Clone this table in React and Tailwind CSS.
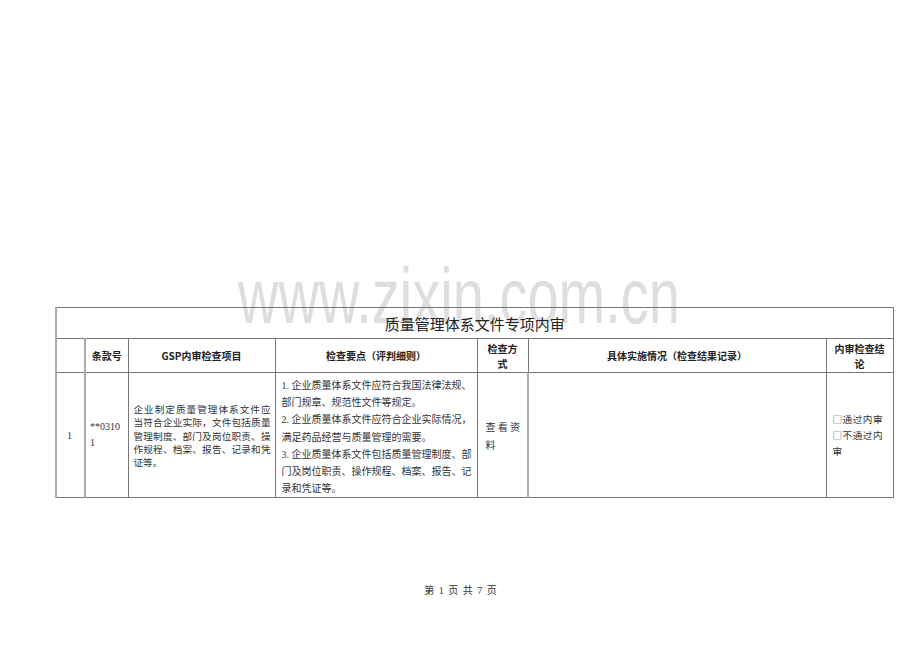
import React from 'react';

// 质量管理体系文件专项内审 — single page of an audit checklist
const serif = "font-['Liberation_Serif','Noto_Sans_CJK_SC',serif]";
const sans = "font-['Noto_Sans_CJK_SC','Noto_Sans',sans-serif]";

function Lines({ lines, className }) {
  // every line but the last is stretched to the full width, like the Word source
  return (
    <div className={className}>
      {lines.map((t, i) => (
        <div
          key={i}
          className={'whitespace-nowrap ' + (i < lines.length - 1 ? '[text-align-last:justify] text-justify' : '')}
        >
          {t}
        </div>
      ))}
    </div>
  );
}

export default function App() {
  const item = [
    '企业制定质量管理体系文件应',
    '当符合企业实际，文件包括质量',
    '管理制度、部门及岗位职责、操',
    '作规程、档案、报告、记录和凭',
    '证等。',
  ];
  const points = [
    ['1. 企业质量体系文件应符合我国法律法规、', '部门规章、规范性文件等规定。'],
    ['2. 企业质量体系文件应符合企业实际情况，', '满足药品经营与质量管理的需要。'],
    ['3. 企业质量体系文件包括质量管理制度、部', '门及岗位职责、操作规程、档案、报告、记', '录和凭证等。'],
  ];

  return (
    <div className="relative w-[920px] h-[651px] bg-white overflow-hidden">
      {/* watermark */}
      <div className="absolute left-[238px] top-[276px] text-[56px] leading-none font-['Liberation_Sans',Arial,sans-serif] text-[#dedede] scale-y-[1.38] origin-[0_47px] whitespace-nowrap select-none">
        www.zixin.com.cn
      </div>

      <div className="relative flex flex-col items-start pt-[307px] pl-[55px]">
        <table className="table-fixed border-collapse w-[837px] text-[#222]">
          <colgroup>
            <col className="w-[29px]" />
            <col className="w-[43px]" />
            <col className="w-[147px]" />
            <col className="w-[202px]" />
            <col className="w-[51px]" />
            <col className="w-[298px]" />
            <col className="w-[67px]" />
          </colgroup>
          <tbody>
            <tr className="h-[31px]">
              <td colSpan={7} className={`border border-[#777] border-l-2 border-l-[#aaa] text-center text-[15px] pt-[3px] ${sans}`}>
                质量管理体系文件专项内审
              </td>
            </tr>
            <tr className={`h-[34px] text-[10px] font-bold leading-[15px] text-center ${sans}`}>
              <td className="border border-[#777] border-l-2 border-l-[#aaa]"></td>
              <td className="border border-[#777] border-l-2 border-l-[#aaa]">条款号</td>
              <td className="border border-[#777]">GSP内审检查项目</td>
              <td className="border border-[#777]">检查要点（评判细则）</td>
              <td className="border border-[#777] px-[8px]">检查方<br />式</td>
              <td className="border border-[#777]">具体实施情况（检查结果记录）</td>
              <td className="border border-[#777] px-[6px]">内审检查结<br />论</td>
            </tr>
            <tr className={`h-[124px] text-[10px] text-[#333] ${serif}`}>
              <td className="border border-[#777] border-l-2 border-l-[#aaa] text-center pr-[2px]">1</td>
              <td className="border border-[#777] border-l-2 border-l-[#aaa] pl-[4px] leading-[16px]">
                **0310<br />1
              </td>
              <td className="border border-[#777] pl-[5px] pr-[4px]">
                <Lines lines={item} className="leading-[13.4px] text-[9.6px] pt-[2px]" />
              </td>
              <td className="border border-[#777] pl-[6px] pr-[5px] align-top pt-[4px]">
                <div className="leading-[17.2px]">
                  {points.map((p, i) => (
                    <Lines key={i} lines={p} />
                  ))}
                </div>
              </td>
              <td className="border border-[#777] pl-[8px] pr-[7px]">
                <Lines lines={['查看资', '料']} className="leading-[18px] pt-[4px]" />
              </td>
              <td className="border border-[#777] border-l-2 border-l-[#aaa]"></td>
              <td className="border border-[#777] pl-[6px] pr-[10px]">
                <Lines
                  lines={['□通过内审', '□不通过内', '审']}
                  className={`leading-[16px] text-[9.6px] ${sans}`}
                />
              </td>
            </tr>
          </tbody>
        </table>
      </div>

      <div className={`relative mt-[85px] text-center text-[10px] text-[#333] tracking-[1px] pl-[2px] ${serif}`}>
        第 1 页 共 7 页
      </div>
    </div>
  );
}
